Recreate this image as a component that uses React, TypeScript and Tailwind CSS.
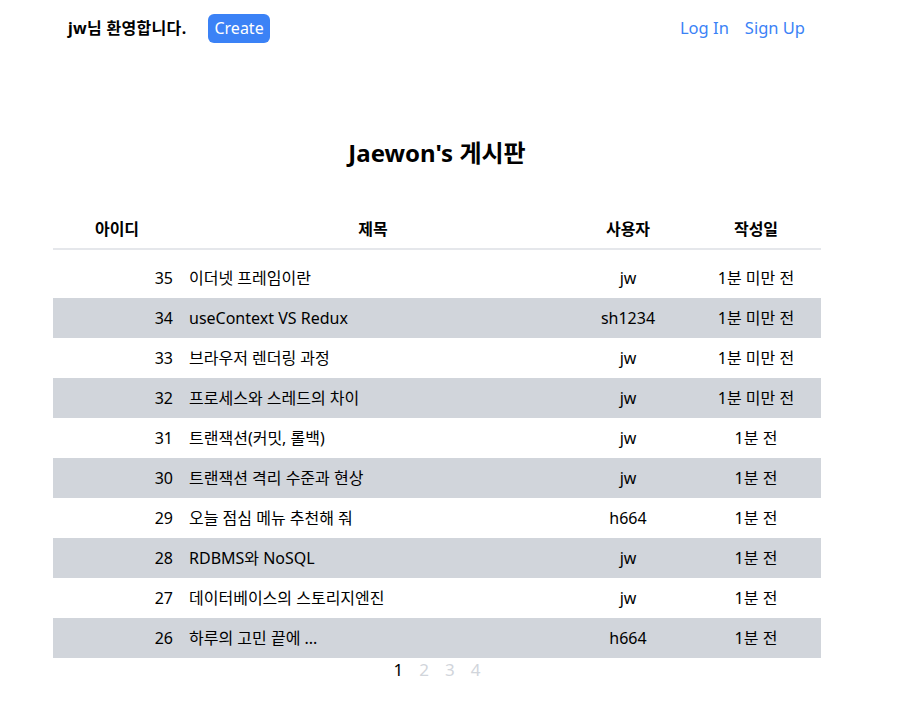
import React from 'react';

interface Post {
  id: number;
  title: string;
  user: string;
  date: string;
}

const posts: Post[] = [
  { id: 35, title: '이더넷 프레임이란', user: 'jw', date: '1분 미만 전' },
  { id: 34, title: 'useContext VS Redux', user: 'sh1234', date: '1분 미만 전' },
  { id: 33, title: '브라우저 렌더링 과정', user: 'jw', date: '1분 미만 전' },
  { id: 32, title: '프로세스와 스레드의 차이', user: 'jw', date: '1분 미만 전' },
  { id: 31, title: '트랜잭션(커밋, 롤백)', user: 'jw', date: '1분 전' },
  { id: 30, title: '트랜잭션 격리 수준과 현상', user: 'jw', date: '1분 전' },
  { id: 29, title: '오늘 점심 메뉴 추천해 줘', user: 'h664', date: '1분 전' },
  { id: 28, title: 'RDBMS와 NoSQL', user: 'jw', date: '1분 전' },
  { id: 27, title: '데이터베이스의 스토리지엔진', user: 'jw', date: '1분 전' },
  { id: 26, title: '하루의 고민 끝에 ...', user: 'h664', date: '1분 전' },
];

const cols = 'grid grid-cols-[128px_384px_126px_130px]';

const App: React.FC = () => {
  return (
    <div
      className="min-h-screen bg-white text-black pl-[53px]"
      style={{ fontFamily: '"Noto Sans", "Noto Sans CJK KR", sans-serif' }}
    >
      <div className="w-[768px]">
        {/* nav */}
        <header className="h-14 flex items-center justify-between pl-[15px] pr-[16px]">
          <div className="flex items-center">
            <span className="font-bold text-[16px] tracking-[0.3px]">jw님 환영합니다.</span>
            <button className="ml-[22px] bg-[#3b82f6] text-white text-[16px] px-1.5 h-[29px] rounded-md leading-none">
              Create
            </button>
          </div>
          <div className="flex items-center gap-4 text-[#3b82f6] text-[16.5px]">
            <a href="#">Log In</a>
            <a href="#">Sign Up</a>
          </div>
        </header>

        <h1 className="mt-[81px] text-center text-2xl font-bold leading-8">Jaewon's 게시판</h1>

        <div className="mt-[41px]">
          <div className={`${cols} h-[40px] items-center font-bold text-[16px] border-b-2 border-[#e5e7eb]`}>
            <div className="text-center">아이디</div>
            <div className="text-center">제목</div>
            <div className="text-center">사용자</div>
            <div className="text-center">작성일</div>
          </div>
          <div className="mt-2">
            {posts.map((p, i) => (
              <div
                key={p.id}
                className={`${cols} h-10 items-center text-[16px] ${i % 2 === 1 ? 'bg-[#d1d5db]' : 'bg-white'}`}
              >
                <div className="text-right pr-2">{p.id}</div>
                <div className="pl-2">{p.title}</div>
                <div className="text-center">{p.user}</div>
                <div className="text-center">{p.date}</div>
              </div>
            ))}
          </div>
          <div className="flex justify-center gap-4 text-[17px] leading-6">
            <span className="text-black">1</span>
            <span className="text-[#d1d5db]">2</span>
            <span className="text-[#d1d5db]">3</span>
            <span className="text-[#d1d5db]">4</span>
          </div>
        </div>
      </div>
    </div>
  );
};

export default App;
